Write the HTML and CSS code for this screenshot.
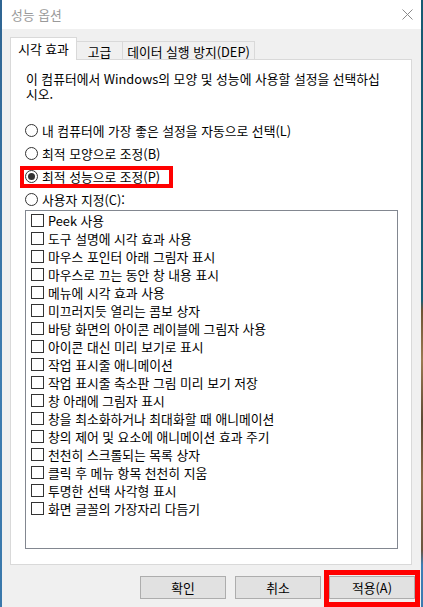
FILE: index.html
```html
<!DOCTYPE html>
<html lang="ko">
<head>
<meta charset="utf-8">
<title>성능 옵션</title>
<link rel="stylesheet" href="styles.css">
</head>
<body>
<div class="screen">
  <div class="desk desk-left"></div>
  <div class="window">
    <div class="titlebar">
      <span class="title">성능 옵션</span>
      <svg class="close" width="11" height="11" viewBox="0 0 11 11"><path d="M0.5 0.5 L10.5 10.5 M10.5 0.5 L0.5 10.5" stroke="#8a8a8a" stroke-width="1" fill="none"/></svg>
    </div>
    <div class="body">
      <div class="tabs">
        <div class="tab active">시각 효과</div>
        <div class="tab t2">고급</div>
        <div class="tab t3">데이터 실행 방지(DEP)</div>
      </div>
      <div class="panel">
        <p class="desc"><span>이 컴퓨터에서 Windows의 모양 및 성능에 사용할 설정을 선택하십</span><span>시오.</span></p>
        <div class="radios">
          <div class="radio"><span class="circle"></span>내 컴퓨터에 가장 좋은 설정을 자동으로 선택(L)</div>
          <div class="radio"><span class="circle"></span>최적 모양으로 조정(B)</div>
          <div class="radio marked"><span class="circle checked"></span>최적 성능으로 조정(P)</div>
          <div class="radio last"><span class="circle"></span>사용자 지정(C):</div>
        </div>
        <div class="list">
          <div class="item"><span class="box"></span>Peek 사용</div>
          <div class="item"><span class="box"></span>도구 설명에 시각 효과 사용</div>
          <div class="item"><span class="box"></span>마우스 포인터 아래 그림자 표시</div>
          <div class="item"><span class="box"></span>마우스로 끄는 동안 창 내용 표시</div>
          <div class="item"><span class="box"></span>메뉴에 시각 효과 사용</div>
          <div class="item"><span class="box"></span>미끄러지듯 열리는 콤보 상자</div>
          <div class="item"><span class="box"></span>바탕 화면의 아이콘 레이블에 그림자 사용</div>
          <div class="item"><span class="box"></span>아이콘 대신 미리 보기로 표시</div>
          <div class="item"><span class="box"></span>작업 표시줄 애니메이션</div>
          <div class="item"><span class="box"></span>작업 표시줄 축소판 그림 미리 보기 저장</div>
          <div class="item"><span class="box"></span>창 아래에 그림자 표시</div>
          <div class="item"><span class="box"></span>창을 최소화하거나 최대화할 때 애니메이션</div>
          <div class="item"><span class="box"></span>창의 제어 및 요소에 애니메이션 효과 주기</div>
          <div class="item"><span class="box"></span>천천히 스크롤되는 목록 상자</div>
          <div class="item"><span class="box"></span>클릭 후 메뉴 항목 천천히 지움</div>
          <div class="item"><span class="box"></span>투명한 선택 사각형 표시</div>
          <div class="item"><span class="box"></span>화면 글꼴의 가장자리 다듬기</div>
        </div>
      </div>
      <div class="buttons">
        <div class="btn">확인</div>
        <div class="btn b2">취소</div>
        <div class="btn b3 marked">적용(A)</div>
      </div>
    </div>
  </div>
  <div class="desk desk-right"></div>
</div>
</body>
</html>
```
FILE: styles.css
```css
*, *::before, *::after { box-sizing: border-box; }
html, body { margin: 0; padding: 0; }
body {
  width: 423px;
  height: 607px;
  overflow: hidden;
  font-family: "Noto Sans CJK KR", "Noto Sans", sans-serif;
  font-size: 12.8px;
  color: #000;
}
.screen { display: flex; width: 423px; height: 607px; }
.desk { width: 2px; height: 607px; }
.desk-left { background: linear-gradient(#2f6592, #3d7cb0 60%, #3a78ab); }
.desk-right {
  background: linear-gradient(#175a72 0, #1b5f77 300px, #6e5334 310px, #9a7a52 360px, #5e4a35 420px, #8b6b48 480px, #6a5540 550px, #3d7eb5 565px, #3b7ab0 100%);
}
.window { width: 419px; display: flex; flex-direction: column; background: #f0f0f0; }
.titlebar {
  height: 29px;
  background: #fff;
  display: flex;
  align-items: center;
  padding-left: 9px;
}
.title { color: #9a9a9a; line-height: 15px; margin-top: -1px; }
.close { margin-left: auto; margin-right: 8px; display: block; }
.body { flex: 1; padding: 8px 9px 0 8px; }
.tabs { display: flex; align-items: flex-end; height: 22px; }
.tab {
  height: 18px;
  border-top: 1px solid #d9d9d9;
  border-right: 1px solid #d9d9d9;
  display: flex;
  align-items: center;
  justify-content: center;
  line-height: 15px;
  padding-top: 1px;
  white-space: nowrap;
}
.tab.active {
  position: relative;
  z-index: 1;
  width: 67px;
  height: 23px;
  margin-bottom: -1px;
  background: #fff;
  border-left: 1px solid #d9d9d9;
  padding-top: 0;
  padding-bottom: 1px;
}
.t2 { width: 46px; }
.t3 { width: 132px; }
.panel {
  width: 402px;
  height: 506px;
  border: 1px solid #d9d9d9;
  background: #fff;
}
.desc { margin: 0; padding: 11px 0 0 15px; line-height: 15px; }
.desc span { display: block; white-space: nowrap; height: 15px; }
.radios { margin-top: 18px; padding-left: 14px; }
.radio {
  position: relative;
  height: 23px;
  display: flex;
  align-items: center;
  white-space: nowrap;
  line-height: 15px;
}
.radio.last { height: 22px; }
.circle {
  width: 13px;
  height: 13px;
  border: 1px solid #333;
  border-radius: 50%;
  margin-right: 4px;
  display: flex;
  align-items: center;
  justify-content: center;
  flex: none;
}
.circle.checked::after {
  content: "";
  width: 7px;
  height: 7px;
  border-radius: 50%;
  background: #333;
}
.radio.marked::after {
  content: "";
  position: absolute;
  left: -5px;
  top: 1px;
  width: 153px;
  height: 22px;
  border: 4px solid #ff0000;
}
.list {
  margin: 0 13px 0 14px;
  height: 339px;
  border: 1px solid #828790;
  background: #fff;
}
.item {
  height: 18px;
  display: flex;
  align-items: center;
  padding-left: 5px;
  white-space: nowrap;
  line-height: 15px;
}
.box {
  width: 13px;
  height: 13px;
  border: 1px solid #333;
  margin-right: 4px;
  flex: none;
}
.buttons {
  display: flex;
  justify-content: flex-end;
  margin-top: 11px;
  margin-right: -3px;
}
.btn {
  position: relative;
  width: 86px;
  height: 23px;
  background: #e1e1e1;
  border: 1px solid #adadad;
  display: flex;
  align-items: center;
  justify-content: center;
  line-height: 15px;
}
.b2 { margin-left: 9px; }
.b3 { margin-left: 8px; }
.btn.marked::after {
  content: "";
  position: absolute;
  left: -6px;
  right: -6px;
  top: -7px;
  bottom: -9px;
  border: 5px solid #ff0000;
}
```
